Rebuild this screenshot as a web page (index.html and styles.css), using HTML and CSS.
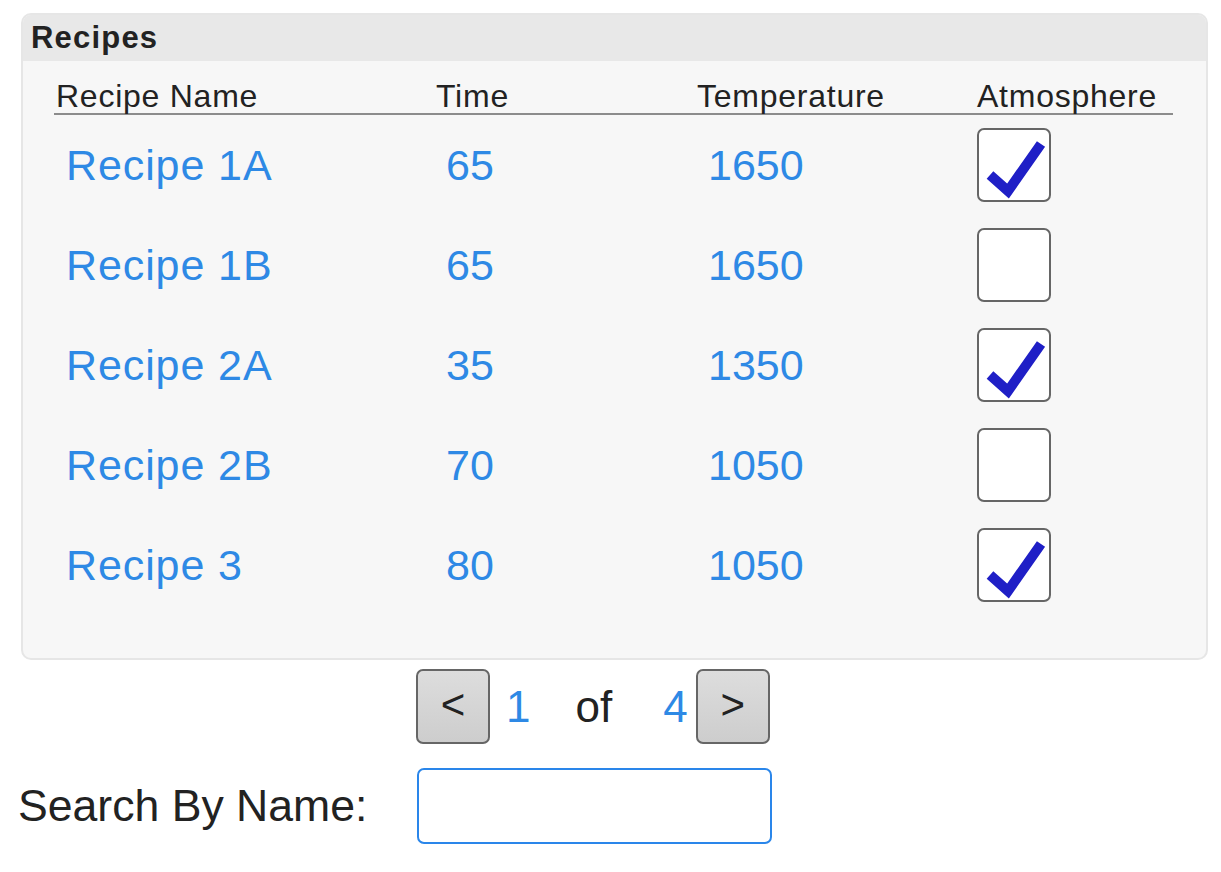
FILE: index.html
```html
<!DOCTYPE html>
<html>
<head>
<meta charset="utf-8">
<link rel="stylesheet" href="styles.css">
</head>
<body>
<div class="panel">
  <div class="panel-title">Recipes</div>
  <div class="table">
    <div class="row head">
      <div class="c1">Recipe Name</div>
      <div class="c2">Time</div>
      <div class="c3">Temperature</div>
      <div class="c4">Atmosphere</div>
    </div>
    <div class="row data">
      <div class="c1">Recipe 1A</div>
      <div class="c2">65</div>
      <div class="c3">1650</div>
      <div class="c4"><span class="box"><svg viewBox="0 0 70 70" width="70" height="70"><polyline points="11,45 29,61 62,14" class="tick"/></svg></span></div>
    </div>
    <div class="row data">
      <div class="c1">Recipe 1B</div>
      <div class="c2">65</div>
      <div class="c3">1650</div>
      <div class="c4"><span class="box"></span></div>
    </div>
    <div class="row data">
      <div class="c1">Recipe 2A</div>
      <div class="c2">35</div>
      <div class="c3">1350</div>
      <div class="c4"><span class="box"><svg viewBox="0 0 70 70" width="70" height="70"><polyline points="11,45 29,61 62,14" class="tick"/></svg></span></div>
    </div>
    <div class="row data">
      <div class="c1">Recipe 2B</div>
      <div class="c2">70</div>
      <div class="c3">1050</div>
      <div class="c4"><span class="box"></span></div>
    </div>
    <div class="row data">
      <div class="c1">Recipe 3</div>
      <div class="c2">80</div>
      <div class="c3">1050</div>
      <div class="c4"><span class="box"><svg viewBox="0 0 70 70" width="70" height="70"><polyline points="11,45 29,61 62,14" class="tick"/></svg></span></div>
    </div>
  </div>
</div>
<div class="pager">
  <button class="pbtn">&lt;</button>
  <span class="num n1">1</span>
  <span class="of">of</span>
  <span class="num n4">4</span>
  <button class="pbtn">&gt;</button>
</div>
<div class="search">
  <label class="slabel">Search By Name:</label>
  <input class="sinput" type="text">
</div>
</body>
</html>
```
FILE: styles.css
```css
* { box-sizing: border-box; }
body {
  margin: 0;
  background: #ffffff;
  font-family: "Liberation Sans", Arial, sans-serif;
  color: #222222;
}
.panel {
  margin: 13px 0 0 21px;
  width: 1187px;
  height: 647px;
  background: #f7f7f7;
  border: 2px solid #e6e6e6;
  border-radius: 10px;
  overflow: hidden;
}
.panel-title {
  height: 46px;
  background: #e8e8e8;
  font-weight: bold;
  font-size: 31px;
  letter-spacing: 1.2px;
  line-height: 46px;
  padding-left: 8px;
  color: #222;
}
.table {
  margin-left: 31px;
  width: 1119px;
  padding-top: 12px;
}
.row {
  display: grid;
  grid-template-columns: 380px 261px 280px 198px;
}
.head {
  font-size: 32px;
  letter-spacing: 0.75px;
  line-height: 38px;
  height: 42px;
  border-bottom: 2px solid #8c8c8c;
  color: #222;
}
.head > div { padding-left: 2px; padding-top: 4px; }
.data {
  height: 100px;
  align-items: center;
  font-size: 43px;
  color: #2e89e5;
}
.data .c1 { padding-left: 12px; letter-spacing: 0.9px; }
.data .c2 { padding-left: 12px; }
.data .c3 { padding-left: 13px; }
.data .c4 { padding-left: 2px; display: flex; }
.box {
  display: flex;
  align-items: center;
  justify-content: center;
  width: 74px;
  height: 74px;
  background: #ffffff;
  border: 2px solid #666666;
  border-radius: 7px;
}
.box svg { display: block; }
.tick {
  fill: none;
  stroke: #1f1fc6;
  stroke-width: 10;
  stroke-linejoin: miter;
  stroke-miterlimit: 10;
  stroke-linecap: butt;
}
.pager {
  display: flex;
  align-items: center;
  margin: 9px 0 0 416px;
  height: 75px;
  font-size: 44px;
}
.pbtn {
  width: 74px;
  height: 75px;
  border: 2px solid #666666;
  border-radius: 7px;
  background: linear-gradient(#dddddd, #cdcdcd);
  font-family: "Liberation Sans", Arial, sans-serif;
  font-size: 42px;
  color: #222;
  padding: 0 0 4px 0;
}
.num { color: #2e89e5; }
.n1 { margin-left: 16px; }
.of { margin-left: 45px; color: #222; }
.n4 { margin-left: 51px; margin-right: 8px; }
.search {
  display: flex;
  align-items: center;
  margin-top: 24px;
  height: 76px;
}
.slabel {
  width: 417px;
  padding-left: 18px;
  font-size: 44.6px;
  color: #222;
}
.sinput {
  width: 355px;
  height: 76px;
  border: 2px solid #2a86ea;
  border-radius: 7px;
  background: #fff;
  outline: none;
}
```
